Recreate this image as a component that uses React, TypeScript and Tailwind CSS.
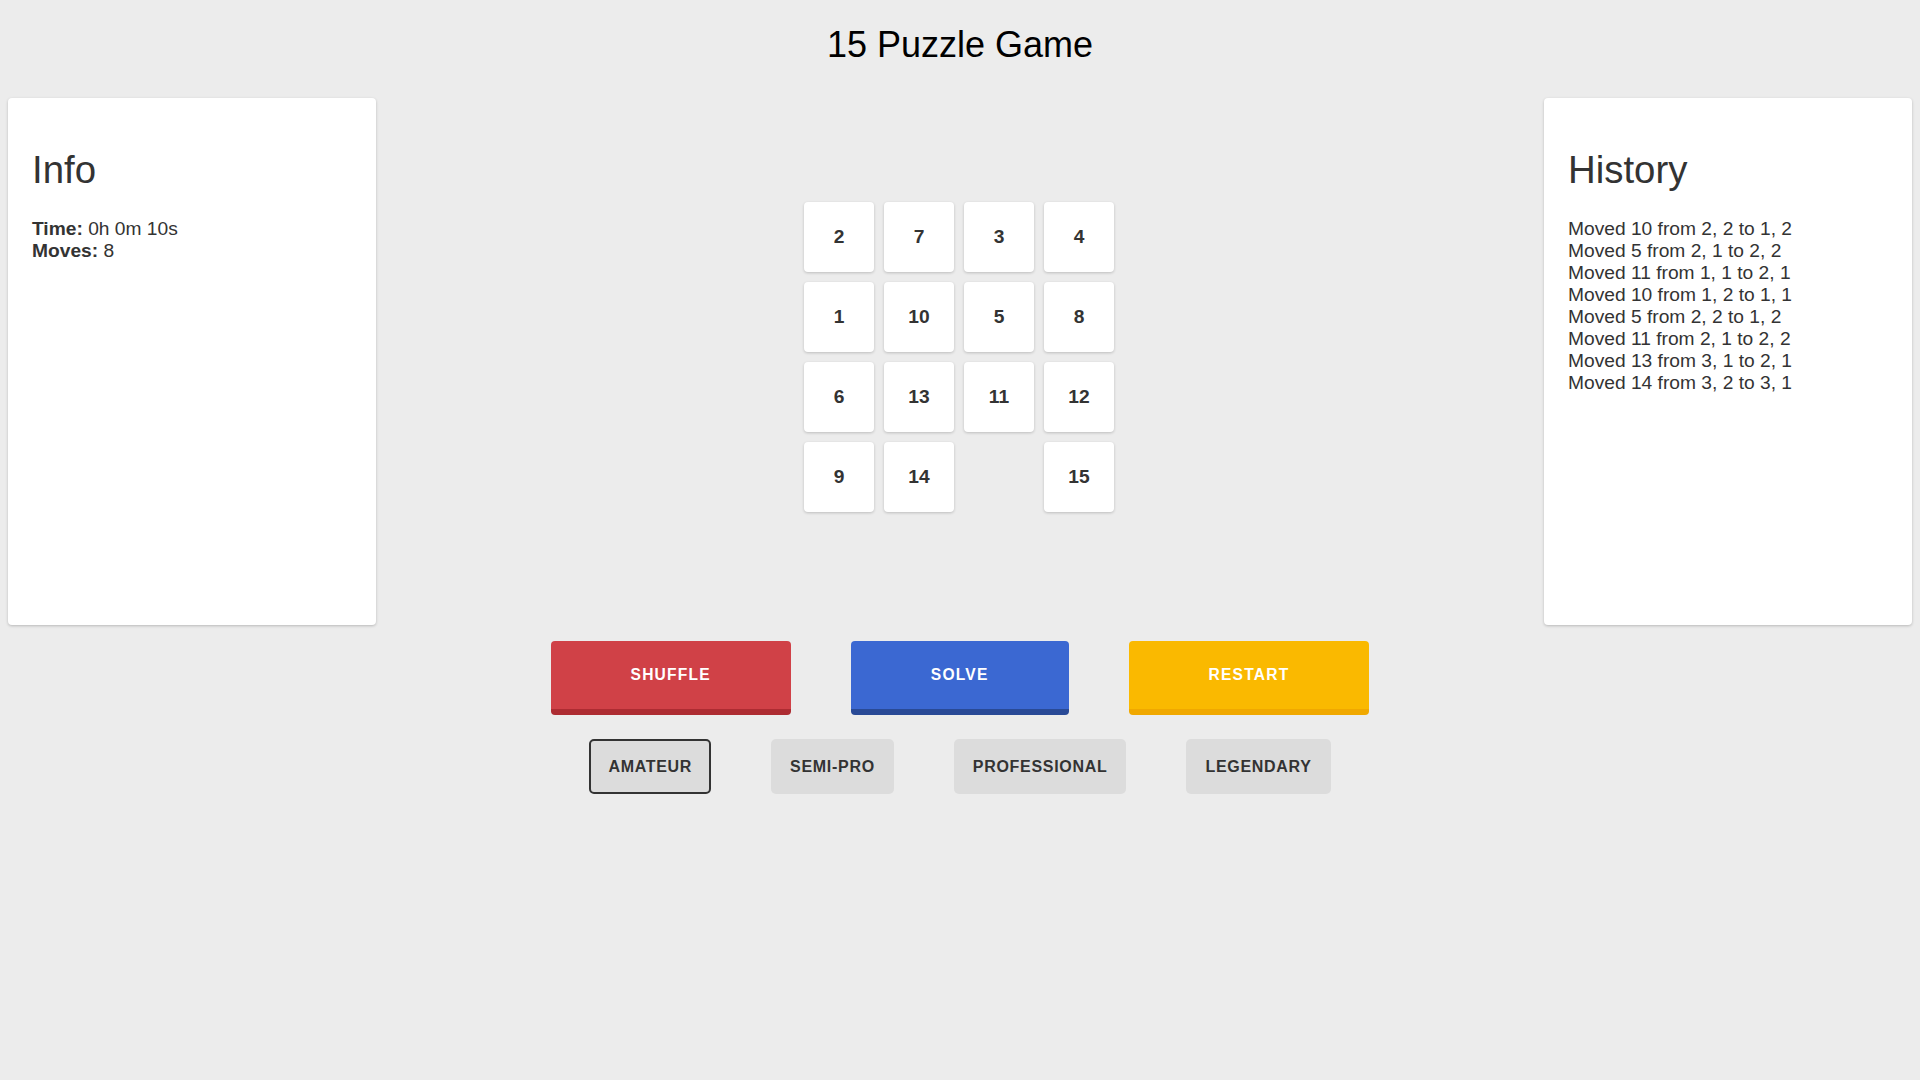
import React from "react";

const tiles: (number | null)[] = [2, 7, 3, 4, 1, 10, 5, 8, 6, 13, 11, 12, 9, 14, null, 15];

const history = [
  "Moved 10 from 2, 2 to 1, 2",
  "Moved 5 from 2, 1 to 2, 2",
  "Moved 11 from 1, 1 to 2, 1",
  "Moved 10 from 1, 2 to 1, 1",
  "Moved 5 from 2, 2 to 1, 2",
  "Moved 11 from 2, 1 to 2, 2",
  "Moved 13 from 3, 1 to 2, 1",
  "Moved 14 from 3, 2 to 3, 1",
];

const levels = ["Amateur", "Semi-Pro", "Professional", "Legendary"];

const Card = ({ title, children }: { title: string; children: React.ReactNode }) => (
  <div className="w-[368px] h-[527px] bg-white rounded-[4px] shadow-[0_1px_3px_rgba(0,0,0,0.22)] px-6 pt-[50px] text-[#333]">
    <h2 className="text-[38.4px] leading-[44px]">{title}</h2>
    <div className="mt-[26px] text-[19.2px] leading-[22px]">{children}</div>
  </div>
);

export default function App() {
  const selected = "Amateur";

  return (
    <div className="min-h-screen bg-[#ececec] font-['Liberation_Sans',Arial,sans-serif]">
      <h1 className="pt-[24px] text-center text-[36px] leading-[41px] text-black">15 Puzzle Game</h1>

      <div className="mt-[33px] flex justify-between px-2">
        <Card title="Info">
          <div>
            <b>Time:</b> 0h 0m 10s
          </div>
          <div>
            <b>Moves:</b> 8
          </div>
        </Card>

        {/* board */}
        <div className="flex-1 flex justify-center pt-[104px] pr-[2px]">
          <div className="grid grid-cols-4 gap-[10px] h-fit">
            {tiles.map((t, i) =>
              t === null ? (
                <div key={i} className="w-[70px] h-[70px]" />
              ) : (
                <div
                  key={i}
                  className="w-[70px] h-[70px] bg-white rounded-[4px] shadow-[0_1px_3px_rgba(0,0,0,0.2)] flex items-center justify-center font-bold text-[19.2px] text-[#333]"
                >
                  {t}
                </div>
              )
            )}
          </div>
        </div>

        <Card title="History">
          {history.map((h) => (
            <div key={h}>{h}</div>
          ))}
        </Card>
      </div>

      <div className="mt-4 flex justify-center gap-[60px]">
        <button className="h-[74px] px-[80px] rounded-[4px] bg-[#d04147] border-b-[6px] border-[#ad2c32] text-white font-bold text-[15.6px] tracking-[1.2px]">
          SHUFFLE
        </button>
        <button className="h-[74px] px-[80px] rounded-[4px] bg-[#3b68d2] border-b-[6px] border-[#294a96] text-white font-bold text-[15.6px] tracking-[1.2px]">
          SOLVE
        </button>
        <button className="h-[74px] px-[80px] rounded-[4px] bg-[#fab900] border-b-[6px] border-[#f0a800] text-white font-bold text-[15.6px] tracking-[1.2px]">
          RESTART
        </button>
      </div>

      <div className="mt-6 flex justify-center gap-[60px]">
        {levels.map((l) => (
          <button
            key={l}
            className={
              "h-[55px] px-[17px] rounded-[5px] bg-[#dcdcdc] border-2 font-bold text-[16px] tracking-[0.7px] text-[#333] uppercase " +
              (l === selected ? "border-[#333]" : "border-transparent")
            }
          >
            {l}
          </button>
        ))}
      </div>
    </div>
  );
}
